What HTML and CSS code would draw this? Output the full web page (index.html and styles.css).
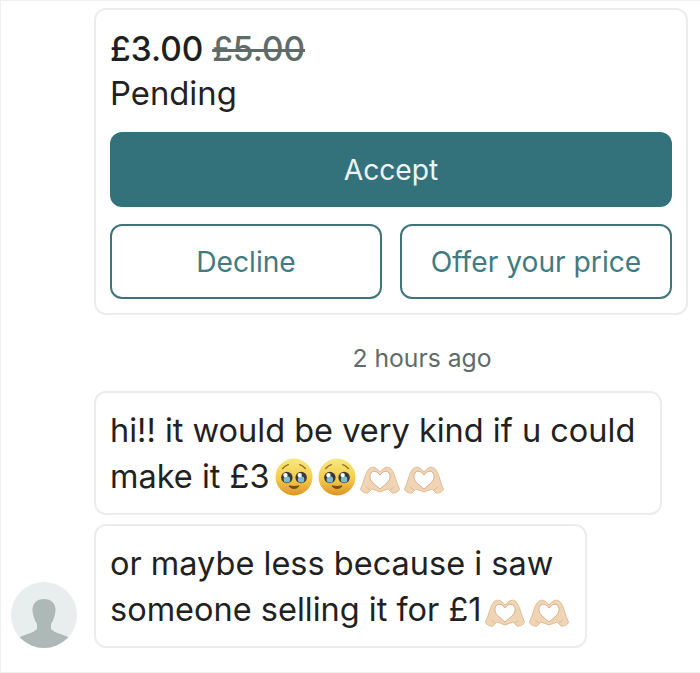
FILE: index.html
```html
<!DOCTYPE html>
<html lang="en">
<head>
    <meta charset="UTF-8">
    <meta name="viewport" content="width=device-width, initial-scale=1.0">
    <title>Chat</title>
    <link rel="stylesheet" href="styles.css">
</head>
<body>
    <svg class="defs" width="0" height="0" aria-hidden="true">
        <defs>
            <linearGradient id="face" x1="0" y1="0" x2="0" y2="1">
                <stop offset="0%" stop-color="#f6ea80"/>
                <stop offset="55%" stop-color="#f5cb4a"/>
                <stop offset="100%" stop-color="#dc9427"/>
            </linearGradient>
            <symbol id="plead" viewBox="0 0 40 40">
                <circle cx="20" cy="20" r="19.500" fill="url(#face)"/>
                <path d="M8 11q3-3 6-4M32 11q-3-3-6-4" fill="none" stroke="#9a6a22" stroke-width="1.500" stroke-linecap="round"/>
                <circle cx="12.500" cy="20.500" r="6" fill="#39383a"/>
                <circle cx="27.500" cy="20.500" r="6" fill="#39383a"/>
                <circle cx="12.500" cy="22.500" r="3.400" fill="#7dbcd0"/>
                <circle cx="27.500" cy="22.500" r="3.400" fill="#7dbcd0"/>
                <circle cx="11" cy="18" r="2.300" fill="#fff"/>
                <circle cx="26" cy="18" r="2.300" fill="#fff"/>
                <path d="M15 29.500q5 5 10 0q-5 1-10 0z" fill="#7a4a14" stroke="#7a4a14" stroke-width="1.200" stroke-linejoin="round"/>
            </symbol>
            <symbol id="hands" viewBox="0 0 40 28">
                <path d="M20 6C17 2 13 0 10 2 7 4 5 10 3 17L.5 23C0 25 6 28 8 27l4-4 8 3 8-3 4 4c2 1 8-2 7.500-4L37 17C35 10 33 4 30 2 27 0 23 2 20 6z" fill="#f0d5b5" stroke="#d9b18c" stroke-width=".8"/>
                <path d="M20 9c-3-4-7-5-9-2-2 3-1 7 2 10l7 6 7-6c3-3 4-7 2-10-2-3-6-2-9 2z" fill="#fff" stroke="#d2a87f" stroke-width=".9"/>
                <path d="M6 21l4 3M34 21l-4 3" fill="none" stroke="#d9b18c" stroke-width=".8"/>
            </symbol>
        </defs>
    </svg>

    <main class="chat">
        <section class="card offer">
            <div class="price">£3.00 <s>£5.00</s></div>
            <div class="status">Pending</div>
            <button class="btn btn-primary" type="button">Accept</button>
            <div class="btn-row">
                <button class="btn btn-outline" type="button">Decline</button>
                <button class="btn btn-outline" type="button">Offer your price</button>
            </div>
        </section>

        <div class="time">2 hours ago</div>

        <div class="card bubble bubble-first">
            hi!! it would be very kind if u could<br>
            make it £3<svg class="emoji plead"><use href="#plead"/></svg><svg class="emoji plead"><use href="#plead"/></svg><svg class="emoji hand"><use href="#hands"/></svg><svg class="emoji hand"><use href="#hands"/></svg>
        </div>

        <div class="last-row">
            <div class="avatar">
                <svg viewBox="0 0 66 66" width="66" height="66">
                    <path d="M33 17c-7.500 0-12 5-11.500 12 .5 5 2.500 10 4.500 13v5L22 50 6 56a32 32 0 0 0 54 0l-16-6-4-3v-5c2-3 4-8 4.500-13C45 22 40.500 17 33 17z" fill="#adb8b7"/>
                </svg>
            </div>
            <div class="card bubble bubble-second">
                or maybe less because i saw<br>
                someone selling it for £1<svg class="emoji hand"><use href="#hands"/></svg><svg class="emoji hand"><use href="#hands"/></svg>
            </div>
        </div>
    </main>
</body>
</html>
```

FILE: styles.css
```css
body {
    font-family: 'Inter', 'Liberation Sans', sans-serif;
    background-color: #fff;
    color: #1f2222;
    margin: 0;
    padding: 0;
    height: 673px;
    box-sizing: border-box;
    border-top: 1px solid #efefef;
    border-left: 1px solid #efefef;
    border-bottom: 1px solid #efefef;
    overflow: hidden;
}

.defs {
    position: absolute;
}

.chat {
    width: 687px;
    padding: 7px 0 0 93px;
    box-sizing: border-box;
}

.card {
    background-color: #fff;
    border: 2px solid #ececec;
    border-radius: 12px;
    box-sizing: border-box;
    font-size: 32.5px;
    line-height: 46px;
}

.offer {
    width: 594px;
    height: 307px;
    padding: 16px 14px;
}

.price {
    font-size: 33.4px;
    font-weight: 500;
    color: #1c2020;
}

.price s {
    color: #5f6b69;
}

.status {
    font-size: 32.8px;
    line-height: 42px;
    margin-bottom: 18px;
}

.btn {
    font-family: inherit;
    font-size: 28.2px;
    display: block;
    width: 100%;
    height: 75px;
    border-radius: 12px;
    box-sizing: border-box;
    padding: 0;
}

.btn-primary {
    background-color: #33727b;
    color: #eef5f5;
    border: none;
}

.btn-row {
    display: flex;
    gap: 18px;
    margin-top: 17px;
}

.btn-outline {
    background-color: #fff;
    color: #3f7b80;
    border: 2px solid #3f7579;
}

.time {
    margin: 28px 0 18px 62px;
    text-align: center;
    font-size: 24.7px;
    line-height: 30px;
    color: #5f6b69;
}

.bubble {
    padding: 15px 14px;
}

.bubble-first {
    width: 568px;
    height: 124px;
}

.bubble-second {
    width: 493px;
    height: 124px;
}

.last-row {
    display: flex;
    align-items: flex-end;
    margin-top: 9px;
}

.avatar {
    width: 66px;
    height: 66px;
    margin-left: -83px;
    margin-right: 17px;
    border-radius: 50%;
    overflow: hidden;
    background-color: #e7eeed;
    flex: none;
}

.emoji {
    display: inline-block;
    vertical-align: -6px;
}

.emoji.plead {
    width: 38px;
    height: 38px;
    margin-left: 5px;
    vertical-align: -8px;
}

.emoji.hand {
    width: 40px;
    height: 28px;
    margin-left: 4px;
}
```
